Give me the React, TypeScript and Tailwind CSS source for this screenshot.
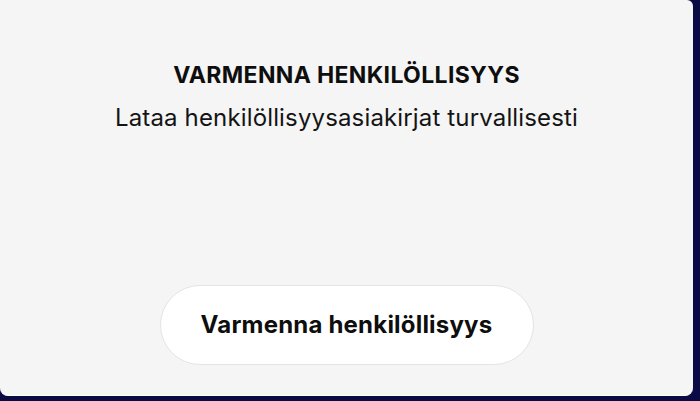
export default function App() {
    return (
        <div className="w-[700px] h-[401px] bg-[#0c0a45]">
            <div
                className="w-[693px] h-[396px] bg-[#f5f5f5] rounded-tr-[6px] rounded-b-[8px] border-b border-white flex flex-col items-center"
                style={{ fontFamily: "Inter, 'Noto Sans', sans-serif" }}
            >
                <h1 className="mt-[61px] text-[23px] leading-[28px] font-bold text-[#0e0e0e] tracking-[0.35px]">
                    VARMENNA HENKILÖLLISYYS
                </h1>
                <p className="mt-[15px] text-[24px] leading-[28px] text-[#141414] tracking-[0.15px]">
                    Lataa henkilöllisyysasiakirjat turvallisesti
                </p>
                <button
                    type="button"
                    className="mt-[153px] w-[374px] h-[80px] rounded-full bg-white border border-[#e4e4e4] text-[24px] font-bold text-[#0e0e0e] tracking-[0.2px]"
                >
                    Varmenna henkilöllisyys
                </button>
            </div>
        </div>
    );
}
